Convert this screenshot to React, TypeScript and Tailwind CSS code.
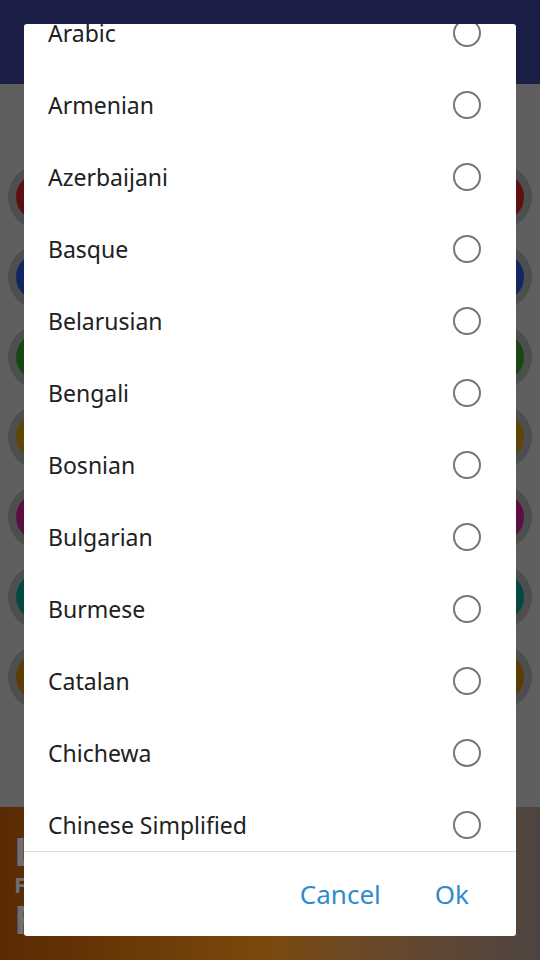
import React from "react";

const languages = [
  "Arabic",
  "Armenian",
  "Azerbaijani",
  "Basque",
  "Belarusian",
  "Bengali",
  "Bosnian",
  "Bulgarian",
  "Burmese",
  "Catalan",
  "Chichewa",
  "Chinese Simplified",
  "Chinese Traditional",
];

const rowColors = ["#5e1010", "#12265f", "#174712", "#5e4608", "#5c0e43", "#054842", "#5e3c06"];

function Circle({ color }: { color: string }) {
  return (
    <div className="w-[64px] h-[64px] rounded-full bg-[#4d4f4f] flex items-center justify-center">
      <div className="w-[48px] h-[48px] rounded-full" style={{ backgroundColor: color }} />
    </div>
  );
}

export default function App() {
  return (
    <div
      className="relative w-[540px] h-[960px] overflow-hidden bg-[#5f5f5f]"
      style={{ fontFamily: '"Noto Sans", "Open Sans", sans-serif' }}
    >
      {/* underlying app (dimmed) */}
      <div className="flex flex-col h-full">
        <div className="h-[84px] bg-[#1b1f48] shrink-0" />
        <div className="flex flex-col pt-[73px] px-[8px] shrink-0">
          {rowColors.map((c, i) => (
            <div key={i} className="h-[80px] flex items-center justify-between">
              <Circle color={c} />
              <Circle color={c} />
            </div>
          ))}
        </div>
        <div className="flex-1 mt-[90px] bg-gradient-to-r from-[#5a2a04] via-[#7a4a0c] to-[#4e4440] flex flex-col pl-[14px] pt-[24px] leading-none">
          <span className="text-[40px] h-[42px] font-bold text-[#6e6e74]">L</span>
          <span className="text-[22px] h-[26px] font-bold text-[#6e6e74]">F</span>
          <span className="text-[40px] h-[42px] font-bold text-[#6e6e74]">F</span>
        </div>
      </div>

      {/* dialog */}
      <div className="absolute inset-0 p-6 flex">
        <div className="flex-1 bg-white rounded-[3px] flex flex-col overflow-hidden">
          <div className="h-[827px] overflow-hidden shrink-0">
            <div className="mt-[-27px]">
              {languages.map((l) => (
                <div key={l} className="h-[72px] flex items-center justify-between pl-[24px] pr-[35px]">
                  <span className="text-[23px] text-[#212121]">{l}</span>
                  <div className="w-[28px] h-[28px] rounded-full border-[2.5px] border-[#767676]" />
                </div>
              ))}
            </div>
          </div>
          <div className="h-px bg-[#dedede] shrink-0" />
          <div className="flex-1 flex items-center justify-end pr-[47px] gap-[50px]">
            <span className="text-[26px] text-[#2f8bd0] mr-[4px]">Cancel</span>
            <span className="text-[26px] text-[#2f8bd0]">Ok</span>
          </div>
        </div>
      </div>
    </div>
  );
}
